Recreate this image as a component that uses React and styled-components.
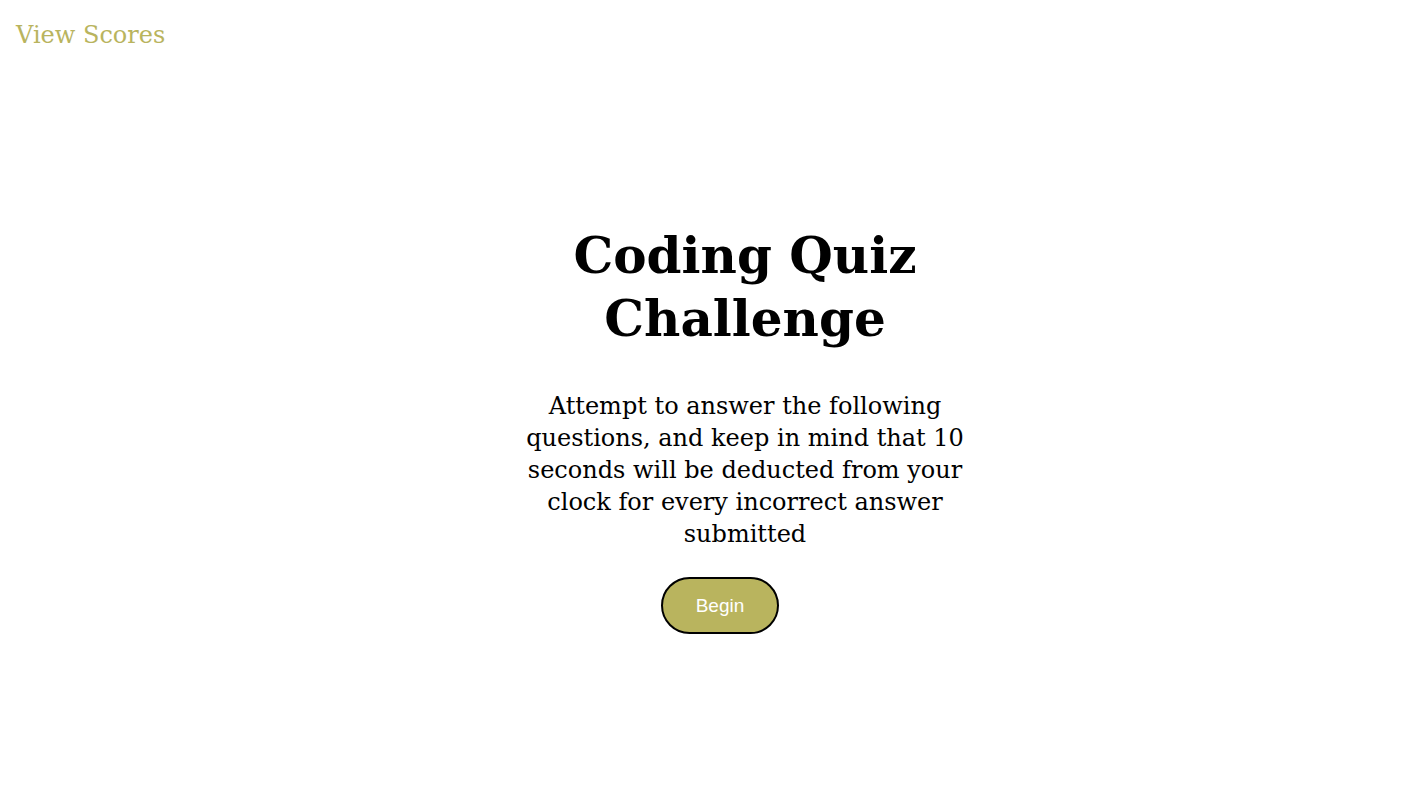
import React from 'react';
import styled, { createGlobalStyle } from 'styled-components';

const GlobalStyle = createGlobalStyle`
  body {
    margin: 0;
    background: #fff;
    font-family: "DejaVu Serif", Georgia, serif;
  }
`

const Header = styled.header`
  display: flex;
  padding: 21px 16px 0;
`

const ScoresLink = styled.a`
  color: #b9b45e;
  font-size: 24px;
  text-decoration: none;
  cursor: pointer;
`

const Main = styled.main`
  display: flex;
  justify-content: center;
  padding: 175px 0 0 72px;
`

const Card = styled.section`
  width: 450px;
  display: flex;
  flex-direction: column;
  align-items: center;
  text-align: center;
`

const Title = styled.h1`
  margin: 0;
  font-size: 50px;
  line-height: 63px;
  font-weight: bold;
  color: #000;
`

const Intro = styled.p`
  margin: 40px 0 27px;
  font-size: 24px;
  line-height: 32px;
  color: #000;
`

const BeginButton = styled.button`
  margin-right: 50px;
  width: 118px;
  height: 57px;
  border: 2px solid #000;
  border-radius: 29px;
  background: #b9b45e;
  color: #fff;
  font-family: "Liberation Sans", Arial, sans-serif;
  font-size: 19px;
  cursor: pointer;
`

export default function App() {
  return (
    <>
      <GlobalStyle />
      <Header>
        <ScoresLink>View Scores</ScoresLink>
      </Header>
      <Main>
        <Card>
          <Title>Coding Quiz Challenge</Title>
          <Intro>
            Attempt to answer the following questions, and keep in mind that 10
            seconds will be deducted from your clock for every incorrect answer
            submitted
          </Intro>
          <BeginButton>Begin</BeginButton>
        </Card>
      </Main>
    </>
  );
}
